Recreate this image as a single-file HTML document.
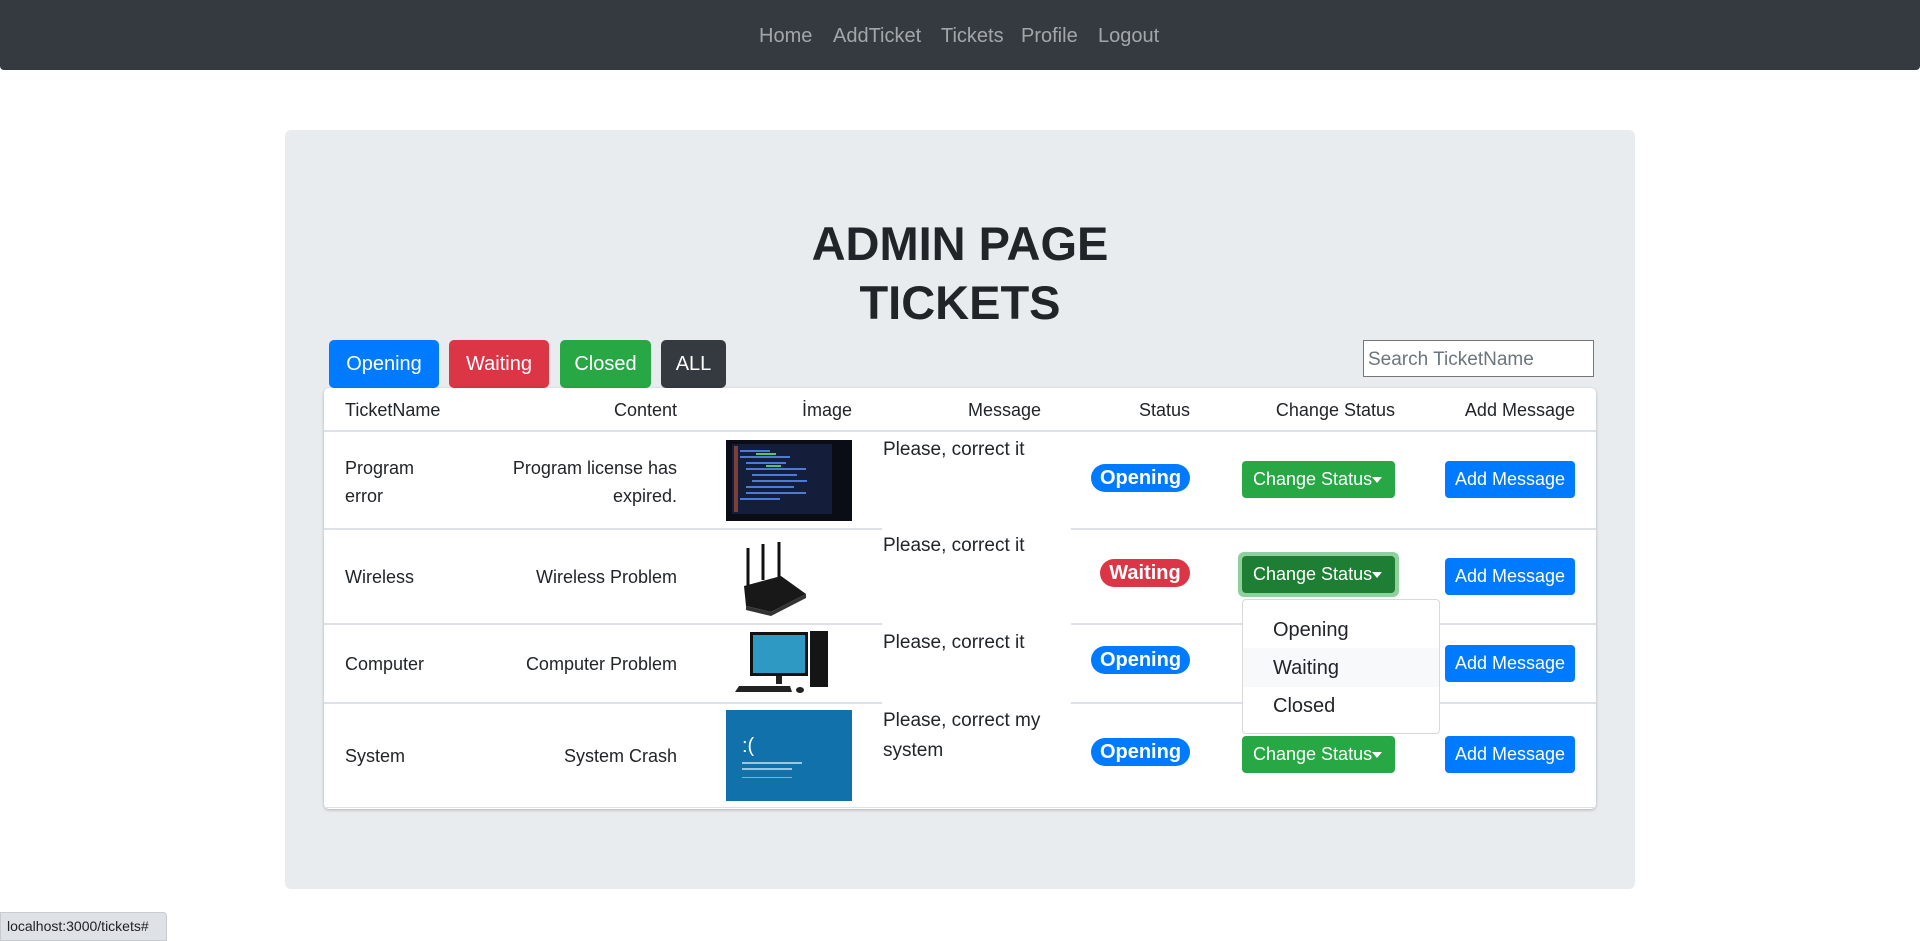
<!DOCTYPE html>
<html><head><meta charset="utf-8"><style>
*{box-sizing:border-box;margin:0;padding:0}
body{width:1920px;height:941px;background:#fff;font-family:"Liberation Sans",sans-serif;color:#212529;position:relative;overflow:hidden}
.a{position:absolute}
.nav{left:0;top:0;width:1920px;height:70px;background:#343a40;border-radius:0 0 4px 4px}
.nav span{position:absolute;top:25px;font-size:20px;color:rgba(255,255,255,.55)}
.jumbo{left:285px;top:130px;width:1350px;height:759px;background:#e9ecef;border-radius:6px}
.title{left:0;width:1920px;text-align:center;font-size:47px;font-weight:bold;color:#212529;font-family:"Liberation Sans",sans-serif}
.btn{top:340px;height:48px;border-radius:5px;color:#fff;font-size:20px;line-height:48px;text-align:center}
.search{left:1363px;top:340px;width:231px;height:37px;border:1px solid #767676;background:#fff;font-size:19px;color:#6c757d;padding:5px 4px;line-height:28px}
.card{left:324px;top:388px;width:1272px;height:421px;background:#fff;border-radius:5px;box-shadow:0 1px 3px rgba(0,0,0,.25)}
.t{font-size:18px;color:#212529;line-height:28px}
.line{height:2px;background:#dee2e6}
.badge{height:28px;border-radius:14px;color:#fff;font-weight:bold;font-size:20px;line-height:28px;text-align:center}
.cs{left:1242px;width:153px;height:37px;background:#28a745;border-radius:4px;color:#fff;font-size:18px;line-height:37px;padding-left:11px}
.cs:after{content:"";position:absolute;right:13px;top:16px;border-left:5px solid transparent;border-right:5px solid transparent;border-top:6px solid #fff}
.am{left:1445px;width:130px;height:37px;background:#007bff;border-radius:4px;color:#fff;font-size:18px;line-height:37px;text-align:center}
</style></head><body>
<div class="a nav">
<span style="left:759px">Home</span><span style="left:833px">AddTicket</span><span style="left:941px">Tickets</span><span style="left:1021px">Profile</span><span style="left:1098px">Logout</span>
</div>
<div class="a jumbo"></div>
<div class="a title" style="top:216px">ADMIN PAGE</div>
<div class="a title" style="top:275px">TICKETS</div>
<div class="a btn" style="left:329px;width:110px;background:#007bff">Opening</div>
<div class="a btn" style="left:449px;width:100px;background:#dc3545">Waiting</div>
<div class="a btn" style="left:560px;width:91px;background:#28a745">Closed</div>
<div class="a btn" style="left:661px;width:65px;background:#343a40">ALL</div>
<div class="a search">Search TicketName</div>
<div class="a card"></div>
<div class="a t" style="left:345px;top:396px">TicketName</div>
<div class="a t" style="left:560px;width:117px;top:396px;text-align:right">Content</div>
<div class="a t" style="left:760px;width:92px;top:396px;text-align:right">İmage</div>
<div class="a t" style="left:900px;width:141px;top:396px;text-align:right">Message</div>
<div class="a t" style="left:1100px;width:90px;top:396px;text-align:right">Status</div>
<div class="a t" style="left:1240px;width:155px;top:396px;text-align:right">Change Status</div>
<div class="a t" style="left:1420px;width:155px;top:396px;text-align:right">Add Message</div>
<div class="a line" style="left:324px;top:430px;width:1272px"></div>
<div class="a line" style="left:324px;top:528px;width:558px"></div><div class="a line" style="left:1071px;top:528px;width:525px"></div>
<div class="a line" style="left:324px;top:623px;width:558px"></div><div class="a line" style="left:1071px;top:623px;width:525px"></div>
<div class="a line" style="left:324px;top:702px;width:558px"></div><div class="a line" style="left:1071px;top:702px;width:525px"></div>
<div class="a line" style="left:324px;top:807px;width:1272px;height:1px"></div>
<div class="a t" style="left:345px;top:454px">Program<br>error</div>
<div class="a t" style="left:480px;width:197px;top:454px;text-align:right">Program license has<br>expired.</div>
<svg class="a" style="left:726px;top:440px" width="126" height="81"><rect width="126" height="81" fill="#0b0d16"/><rect x="6" y="4" width="100" height="70" fill="#141d3a"/><g fill="#4a7bd6"><rect x="14" y="10" width="30" height="2"/><rect x="14" y="16" width="50" height="2"/><rect x="20" y="22" width="40" height="2"/><rect x="20" y="28" width="60" height="2"/><rect x="26" y="34" width="45" height="2"/><rect x="26" y="40" width="55" height="2"/><rect x="20" y="46" width="48" height="2"/><rect x="20" y="52" width="60" height="2"/><rect x="14" y="58" width="40" height="2"/></g><g fill="#58c56a"><rect x="30" y="13" width="20" height="2"/><rect x="40" y="25" width="15" height="2"/></g><rect x="8" y="6" width="4" height="66" fill="#c0582e" opacity=".6"/></svg>
<div class="a t" style="left:883px;top:436px;font-size:19px">Please, correct it</div>
<div class="a badge" style="left:1091px;top:464px;width:99px;background:#007bff">Opening</div>
<div class="a cs" style="top:461px">Change Status</div>
<div class="a am" style="top:461px">Add Message</div>
<div class="a t" style="left:345px;top:563px">Wireless</div>
<div class="a t" style="left:480px;width:197px;top:563px;text-align:right">Wireless Problem</div>
<svg class="a" style="left:726px;top:534px" width="126" height="86"><rect width="126" height="86" fill="#fff"/><g stroke="#111" stroke-width="3"><line x1="22" y1="14" x2="22" y2="52"/><line x1="37" y1="10" x2="37" y2="46"/><line x1="53" y1="8" x2="53" y2="44"/></g><path d="M18 52 L55 42 L80 60 L45 78 L20 72 Z" fill="#181818"/><path d="M20 72 L45 78 L80 60 L80 64 L45 82 L20 76Z" fill="#333"/></svg>
<div class="a t" style="left:883px;top:532px;font-size:19px">Please, correct it</div>
<div class="a badge" style="left:1100px;top:559px;width:90px;background:#dc3545">Waiting</div>
<div class="a" style="left:1238px;top:552px;width:161px;height:45px;border-radius:6px;background:#8fd19e"></div>
<div class="a cs" style="top:556px;background:#1e7e34">Change Status</div>
<div class="a am" style="top:558px">Add Message</div>
<div class="a t" style="left:345px;top:650px">Computer</div>
<div class="a t" style="left:480px;width:197px;top:650px;text-align:right">Computer Problem</div>
<svg class="a" style="left:726px;top:630px" width="126" height="66"><rect width="126" height="66" fill="#fff"/><rect x="24" y="2" width="58" height="44" fill="#111"/><rect x="27" y="5" width="52" height="38" fill="#2e9ac4"/><rect x="50" y="46" width="6" height="8" fill="#222"/><rect x="84" y="1" width="18" height="56" fill="#151515"/><path d="M9 62 L13 56 L64 56 L66 62Z" fill="#222"/><ellipse cx="74" cy="60" rx="4" ry="3" fill="#222"/></svg>
<div class="a t" style="left:883px;top:629px;font-size:19px">Please, correct it</div>
<div class="a badge" style="left:1091px;top:646px;width:99px;background:#007bff">Opening</div>
<div class="a am" style="top:645px">Add Message</div>
<div class="a t" style="left:345px;top:742px">System</div>
<div class="a t" style="left:480px;width:197px;top:742px;text-align:right">System Crash</div>
<svg class="a" style="left:726px;top:710px" width="126" height="91"><rect width="126" height="91" fill="#1171ab"/><text x="16" y="42" font-family="Liberation Sans" font-size="20" fill="#fff">:(</text><rect x="16" y="52" width="60" height="2" fill="#9cc6e0"/><rect x="16" y="58" width="50" height="2" fill="#9cc6e0"/><rect x="16" y="67" width="50" height="1" fill="#7fb0d0"/></svg>
<div class="a t" style="left:883px;top:706px;font-size:19px;line-height:30px">Please, correct my<br>system</div>
<div class="a badge" style="left:1091px;top:738px;width:99px;background:#007bff">Opening</div>
<div class="a cs" style="top:736px">Change Status</div>
<div class="a am" style="top:736px">Add Message</div>
<div class="a" style="left:1242px;top:599px;width:198px;height:135px;background:#fff;border:1px solid rgba(0,0,0,.15);border-radius:4px">
<div style="position:absolute;left:0;top:48px;width:196px;height:39px;background:#f8f9fa"></div>
<div style="position:absolute;left:30px;top:17px;font-size:20px;line-height:26px;color:#212529">Opening</div>
<div style="position:absolute;left:30px;top:55px;font-size:20px;line-height:26px;color:#212529">Waiting</div>
<div style="position:absolute;left:30px;top:93px;font-size:20px;line-height:26px;color:#212529">Closed</div>
</div>
<div class="a" style="left:0;top:912px;width:167px;height:29px;background:#dee1e6;border:1px solid #c8cbd0;border-radius:0 4px 0 0;font-size:14px;line-height:27px;padding-left:6px;color:#202124">localhost:3000/tickets#</div>
</body></html>
